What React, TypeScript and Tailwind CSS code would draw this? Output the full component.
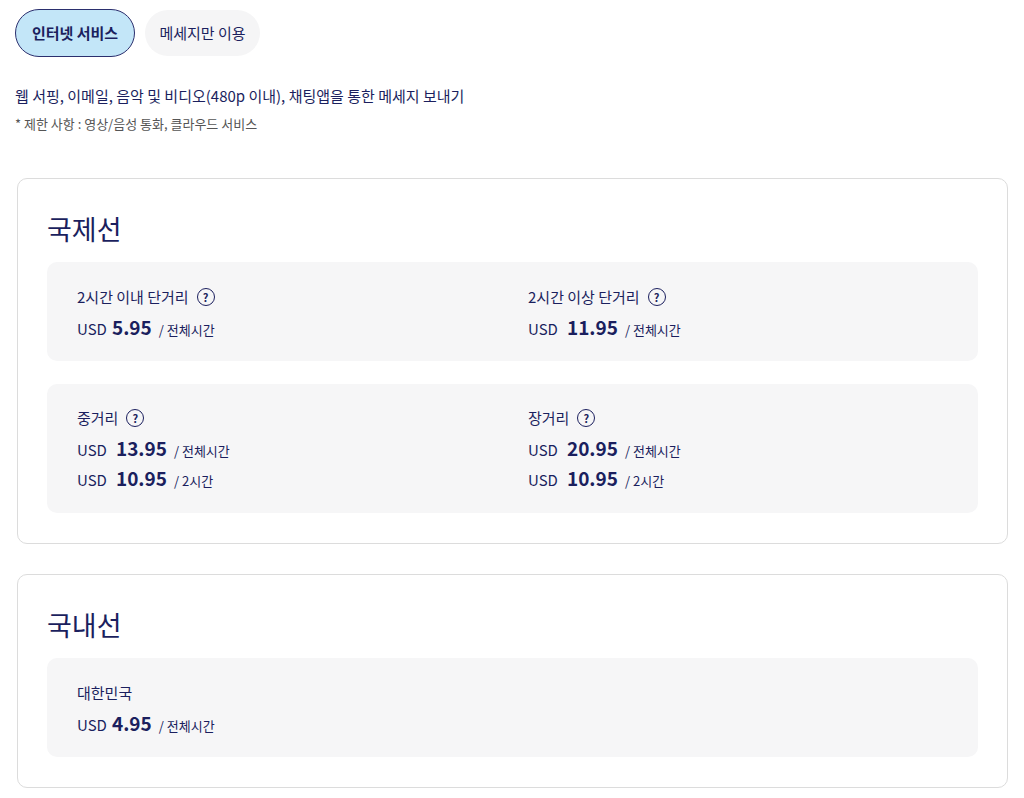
import React from "react";

const Q = () => (
  <span className="inline-flex items-center justify-center w-[18px] h-[18px] rounded-full border-[1.5px] border-[#1b1f5e] text-[11px] font-bold text-[#1b1f5e] ml-2">?</span>
);

const Price = ({ amt, unit, gap }: { amt: string; unit: string; gap?: boolean }) => (
  <div className="flex items-baseline text-[#1b1f5e] h-[30px]">
    <span className="text-[15px]">USD</span>
    <span className={`text-[19px] font-bold ${gap ? "ml-[9px]" : "ml-[5px]"}`}>{amt}</span>
    <span className="text-[13px] ml-[7px]">/ {unit}</span>
  </div>
);

const Cell = ({ title, q = true, prices }: { title: string; q?: boolean; prices: [string, string, boolean?][] }) => (
  <div>
    <div className="flex items-center text-[15px] text-[#1b1f5e] h-[24px] mb-[4px]">{title}{q && <Q />}</div>
    {prices.map((p, i) => <Price key={i} amt={p[0]} unit={p[1]} gap={p[2]} />)}
  </div>
);

export default function App() {
  return (
    <div className="bg-white min-h-[798px] px-[15px] pt-[9px]" style={{ fontFamily: '"Noto Sans CJK KR", "Noto Sans", sans-serif' }}>
      <div className="flex gap-[10px]">
        <div className="w-[120px] h-[48px] rounded-full bg-[#c3e6f8] border-[1.5px] border-[#2b2f6e] flex items-center justify-center text-[15px] font-bold text-[#1b1f5e]">인터넷 서비스</div>
        <div className="w-[115px] h-[46px] mt-[1px] rounded-full bg-[#f5f5f6] flex items-center justify-center text-[15px] text-[#1b1f5e]">메세지만 이용</div>
      </div>
      <div className="mt-[28px] text-[15px] text-[#1b1f5e]">웹 서핑, 이메일, 음악 및 비디오(480p 이내), 채팅앱을 통한 메세지 보내기</div>
      <div className="mt-[6px] text-[13px] text-[#555]">* 제한 사항 : 영상/음성 통화, 클라우드 서비스</div>

      <div className="mt-[45px] ml-[2px] w-[991px] border border-[#dcdcdc] rounded-[10px] px-[29px] pt-[30px] pb-[30px]">
        <div className="text-[27px] text-[#1b1f5e] h-[40px] mb-[13px] leading-[40px]">국제선</div>
        <div className="bg-[#f6f6f7] rounded-[10px] grid grid-cols-[451px_1fr] px-[30px] pt-[23px] pb-[18px]">
          <Cell title="2시간 이내 단거리" prices={[["5.95", "전체시간"]]} />
          <Cell title="2시간 이상 단거리" prices={[["11.95", "전체시간", true]]} />
        </div>
        <div className="bg-[#f6f6f7] rounded-[10px] grid grid-cols-[451px_1fr] px-[30px] pt-[22px] pb-[19px] mt-[23px]">
          <Cell title="중거리" prices={[["13.95", "전체시간", true], ["10.95", "2시간", true]]} />
          <Cell title="장거리" prices={[["20.95", "전체시간", true], ["10.95", "2시간", true]]} />
        </div>
      </div>

      <div className="mt-[30px] ml-[2px] w-[991px] border border-[#dcdcdc] rounded-[10px] px-[29px] pt-[30px] pb-[30px]">
        <div className="text-[27px] text-[#1b1f5e] h-[40px] mb-[13px] leading-[40px]">국내선</div>
        <div className="bg-[#f6f6f7] rounded-[10px] px-[30px] pt-[23px] pb-[18px]">
          <Cell title="대한민국" q={false} prices={[["4.95", "전체시간"]]} />
        </div>
      </div>
    </div>
  );
}
